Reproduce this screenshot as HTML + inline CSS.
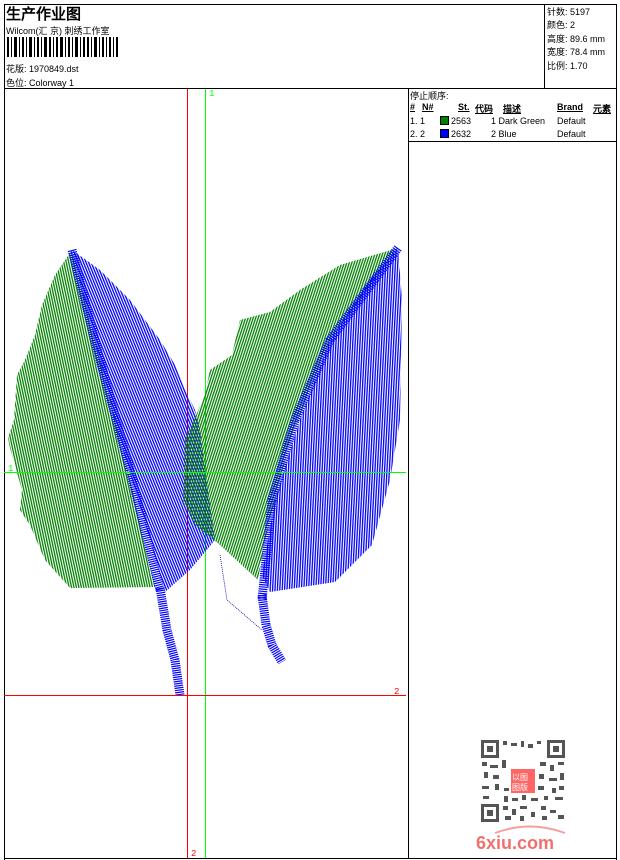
<!DOCTYPE html>
<html><head><meta charset="utf-8"><style>
body{margin:0;background:#fff;width:620px;height:860px;position:relative;overflow:hidden;font-family:"Liberation Sans","WenQuanYi Zen Hei",sans-serif;color:#000;font-size:9px}
.a{position:absolute;white-space:nowrap}
.l{position:absolute;background:#000}
</style></head><body>
<div class="l" style="left:4px;top:4px;width:613px;height:1px"></div>
<div class="l" style="left:4px;top:4px;width:1px;height:856px"></div>
<div class="l" style="left:616px;top:4px;width:1px;height:856px"></div>
<div class="l" style="left:4px;top:858px;width:613px;height:1px"></div>
<div class="l" style="left:4px;top:88px;width:613px;height:1px"></div>
<div class="l" style="left:544px;top:4px;width:1px;height:84px"></div>
<div class="l" style="left:408px;top:88px;width:1px;height:771px"></div>
<div class="l" style="left:408px;top:141px;width:209px;height:1px"></div>
<div class="a" style="left:6px;top:3px;font-size:15px;font-weight:bold">生产作业图</div>
<div class="a" style="left:6px;top:24px">Wilcom(汇 京) 刺绣工作室</div>
<svg class="a" style="left:7px;top:37px" width="112" height="20"><g fill="#000">
<rect x="0" y="0" width="2" height="20"/><rect x="4" y="0" width="1" height="20"/><rect x="7" y="0" width="3" height="20"/><rect x="12" y="0" width="1" height="20"/><rect x="15" y="0" width="2" height="20"/><rect x="19" y="0" width="1" height="20"/><rect x="22" y="0" width="3" height="20"/><rect x="27" y="0" width="1" height="20"/><rect x="30" y="0" width="2" height="20"/><rect x="34" y="0" width="1" height="20"/><rect x="37" y="0" width="3" height="20"/><rect x="42" y="0" width="2" height="20"/><rect x="46" y="0" width="1" height="20"/><rect x="49" y="0" width="2" height="20"/><rect x="53" y="0" width="3" height="20"/><rect x="58" y="0" width="1" height="20"/><rect x="61" y="0" width="2" height="20"/><rect x="65" y="0" width="1" height="20"/><rect x="68" y="0" width="3" height="20"/><rect x="73" y="0" width="1" height="20"/><rect x="76" y="0" width="2" height="20"/><rect x="80" y="0" width="2" height="20"/><rect x="84" y="0" width="1" height="20"/><rect x="87" y="0" width="3" height="20"/><rect x="92" y="0" width="1" height="20"/><rect x="95" y="0" width="2" height="20"/><rect x="99" y="0" width="1" height="20"/><rect x="102" y="0" width="2" height="20"/><rect x="106" y="0" width="1" height="20"/><rect x="109" y="0" width="2" height="20"/></g></svg>
<div class="a" style="left:6px;top:62px">花版:  1970849.dst</div>
<div class="a" style="left:6px;top:76px">色位:  Colorway 1</div>
<div class="a" style="left:547px;top:6px;line-height:13.4px">针数: 5197<br>颜色: 2<br>高度: 89.6 mm<br>宽度: 78.4 mm<br>比例: 1.70</div>
<div class="a" style="left:410px;top:89px">停止顺序:</div>
<div class="a" style="left:410px;top:102px;font-weight:bold;text-decoration:underline">#</div>
<div class="a" style="left:422px;top:102px;font-weight:bold;text-decoration:underline">N#</div>
<div class="a" style="left:458px;top:102px;font-weight:bold;text-decoration:underline">St.</div>
<div class="a" style="left:475px;top:102px;font-weight:bold;text-decoration:underline">代码</div>
<div class="a" style="left:503px;top:102px;font-weight:bold;text-decoration:underline">描述</div>
<div class="a" style="left:557px;top:102px;font-weight:bold;text-decoration:underline">Brand</div>
<div class="a" style="left:593px;top:102px;font-weight:bold;text-decoration:underline">元素</div>
<div class="a" style="left:410px;top:116px">1. 1</div>
<div class="a" style="left:440px;top:116px;width:9px;height:9px;background:#008000;border:1px solid #000;box-sizing:border-box"></div>
<div class="a" style="left:451px;top:116px">2563</div>
<div class="a" style="left:491px;top:116px">1  Dark Green</div>
<div class="a" style="left:557px;top:116px">Default</div>
<div class="a" style="left:410px;top:129px">2. 2</div>
<div class="a" style="left:440px;top:129px;width:9px;height:9px;background:#0000ff;border:1px solid #000;box-sizing:border-box"></div>
<div class="a" style="left:451px;top:129px">2632</div>
<div class="a" style="left:491px;top:129px">2  Blue</div>
<div class="a" style="left:557px;top:129px">Default</div>

<svg class="a" style="left:0;top:0" width="620" height="860">
<defs>
<pattern id="g" width="2.4" height="6" patternUnits="userSpaceOnUse" patternTransform="rotate(-12)"><rect width="1.3" height="6" fill="#008000"/></pattern>
<pattern id="b" width="2.4" height="6" patternUnits="userSpaceOnUse" patternTransform="rotate(-22)"><rect width="1.3" height="6" fill="#0000ff"/></pattern>
<pattern id="b2" width="2.4" height="6" patternUnits="userSpaceOnUse" patternTransform="rotate(3)"><rect width="1.3" height="6" fill="#0000ff"/></pattern>
<pattern id="g2" width="2.4" height="6" patternUnits="userSpaceOnUse" patternTransform="rotate(18)"><rect width="1.3" height="6" fill="#008000"/></pattern>
</defs>
<line x1="187.5" y1="89" x2="187.5" y2="858" stroke="#f00"/>
<line x1="205.5" y1="89" x2="205.5" y2="858" stroke="#0f0"/>
<polygon fill="url(#g)" points="72,250 55,275 42,305 35,335 25,360 17,375 14,420 8,438 10,448 22,490 20,510 30,525 45,560 70,588 155,587 130,480 100,360"/>
<polygon fill="url(#b)" points="72,250 100,270 130,300 160,340 175,365 185,390 195,410 200,430 205,470 215,540 190,570 165,592 150,540 120,440 95,340"/>
<polygon fill="url(#g2)" points="398,248 340,265 300,290 270,312 240,320 232,355 210,370 205,395 185,440 183,500 195,525 220,545 258,580 265,540 290,440 330,340"/>
<polygon fill="url(#b2)" points="398,248 402,300 400,420 390,480 372,545 335,582 270,592 262,575 275,500 300,420 330,340 370,280"/>
<polyline points="72,250 100,360 130,470 160,590" fill="none" stroke="#0000ff" stroke-width="9" stroke-dasharray="1.2 1"/>
<polyline points="398,248 330,340 295,420 272,500 262,600" fill="none" stroke="#0000ff" stroke-width="9" stroke-dasharray="1.2 1"/>
<polyline points="160,588 167,630 175,660 180,695" fill="none" stroke="#0000ff" stroke-width="9" stroke-dasharray="1.2 1"/>
<polyline points="262,595 266,625 272,645 282,662" fill="none" stroke="#0000ff" stroke-width="9" stroke-dasharray="1.2 1"/>
<polyline points="220,555 227,600 262,630" fill="none" stroke="#0000aa" stroke-width="0.8" stroke-dasharray="1 1"/>
<line x1="4" y1="472.5" x2="406" y2="472.5" stroke="#0f0"/>
<line x1="4" y1="695.5" x2="406" y2="695.5" stroke="#f00"/>
<text x="8" y="471" fill="#0f0" font-size="9" font-family="Liberation Mono">1</text>
<text x="209" y="96" fill="#0f0" font-size="9" font-family="Liberation Mono">1</text>
<text x="394" y="694" fill="#f00" font-size="9" font-family="Liberation Mono">2</text>
<text x="191" y="856" fill="#f00" font-size="9" font-family="Liberation Mono">2</text>
<g fill="#555">
<rect x="503" y="741" width="4" height="4"/><rect x="511" y="743" width="6" height="3"/><rect x="521" y="741" width="3" height="6"/><rect x="528" y="744" width="5" height="4"/><rect x="537" y="741" width="4" height="3"/>
<rect x="482" y="762" width="5" height="4"/><rect x="490" y="765" width="8" height="3"/><rect x="502" y="760" width="4" height="8"/><rect x="540" y="762" width="6" height="4"/><rect x="550" y="765" width="4" height="6"/><rect x="558" y="762" width="6" height="3"/>
<rect x="484" y="772" width="4" height="6"/><rect x="493" y="775" width="6" height="4"/><rect x="539" y="774" width="5" height="5"/><rect x="549" y="778" width="8" height="3"/><rect x="560" y="773" width="4" height="7"/>
<rect x="482" y="786" width="7" height="3"/><rect x="495" y="784" width="4" height="6"/><rect x="504" y="788" width="5" height="3"/><rect x="538" y="786" width="6" height="4"/><rect x="552" y="788" width="4" height="5"/><rect x="559" y="786" width="5" height="4"/>
<rect x="483" y="796" width="6" height="3"/><rect x="504" y="796" width="4" height="6"/><rect x="512" y="798" width="6" height="3"/><rect x="522" y="795" width="4" height="5"/><rect x="531" y="798" width="7" height="3"/><rect x="544" y="796" width="4" height="4"/><rect x="555" y="797" width="8" height="3"/>
<rect x="503" y="806" width="5" height="4"/><rect x="512" y="809" width="4" height="6"/><rect x="520" y="806" width="7" height="3"/><rect x="531" y="812" width="4" height="5"/><rect x="541" y="806" width="5" height="4"/><rect x="550" y="810" width="6" height="3"/><rect x="558" y="815" width="6" height="4"/><rect x="505" y="816" width="6" height="4"/><rect x="520" y="816" width="4" height="5"/><rect x="542" y="816" width="5" height="4"/>
<rect x="481" y="740" width="18" height="18"/><rect x="484" y="743" width="12" height="12" fill="#fff"/><rect x="487" y="746" width="6" height="6"/>
<rect x="547" y="740" width="18" height="18"/><rect x="550" y="743" width="12" height="12" fill="#fff"/><rect x="553" y="746" width="6" height="6"/>
<rect x="481" y="804" width="18" height="18"/><rect x="484" y="807" width="12" height="12" fill="#fff"/><rect x="487" y="810" width="6" height="6"/>
</g>
<rect x="511" y="769" width="24" height="24" fill="#f66"/>
<text x="512" y="780" fill="#fff" font-size="8">以图</text>
<text x="512" y="790" fill="#fff" font-size="8">图版</text>
<path d="M495 833 Q530 820 565 833" fill="none" stroke="#f5a0a0" stroke-width="2"/>
<text x="476" y="849" fill="#f07070" font-size="18" font-weight="bold" font-family="Liberation Sans">6xiu.com</text>
</svg>
</body></html>
